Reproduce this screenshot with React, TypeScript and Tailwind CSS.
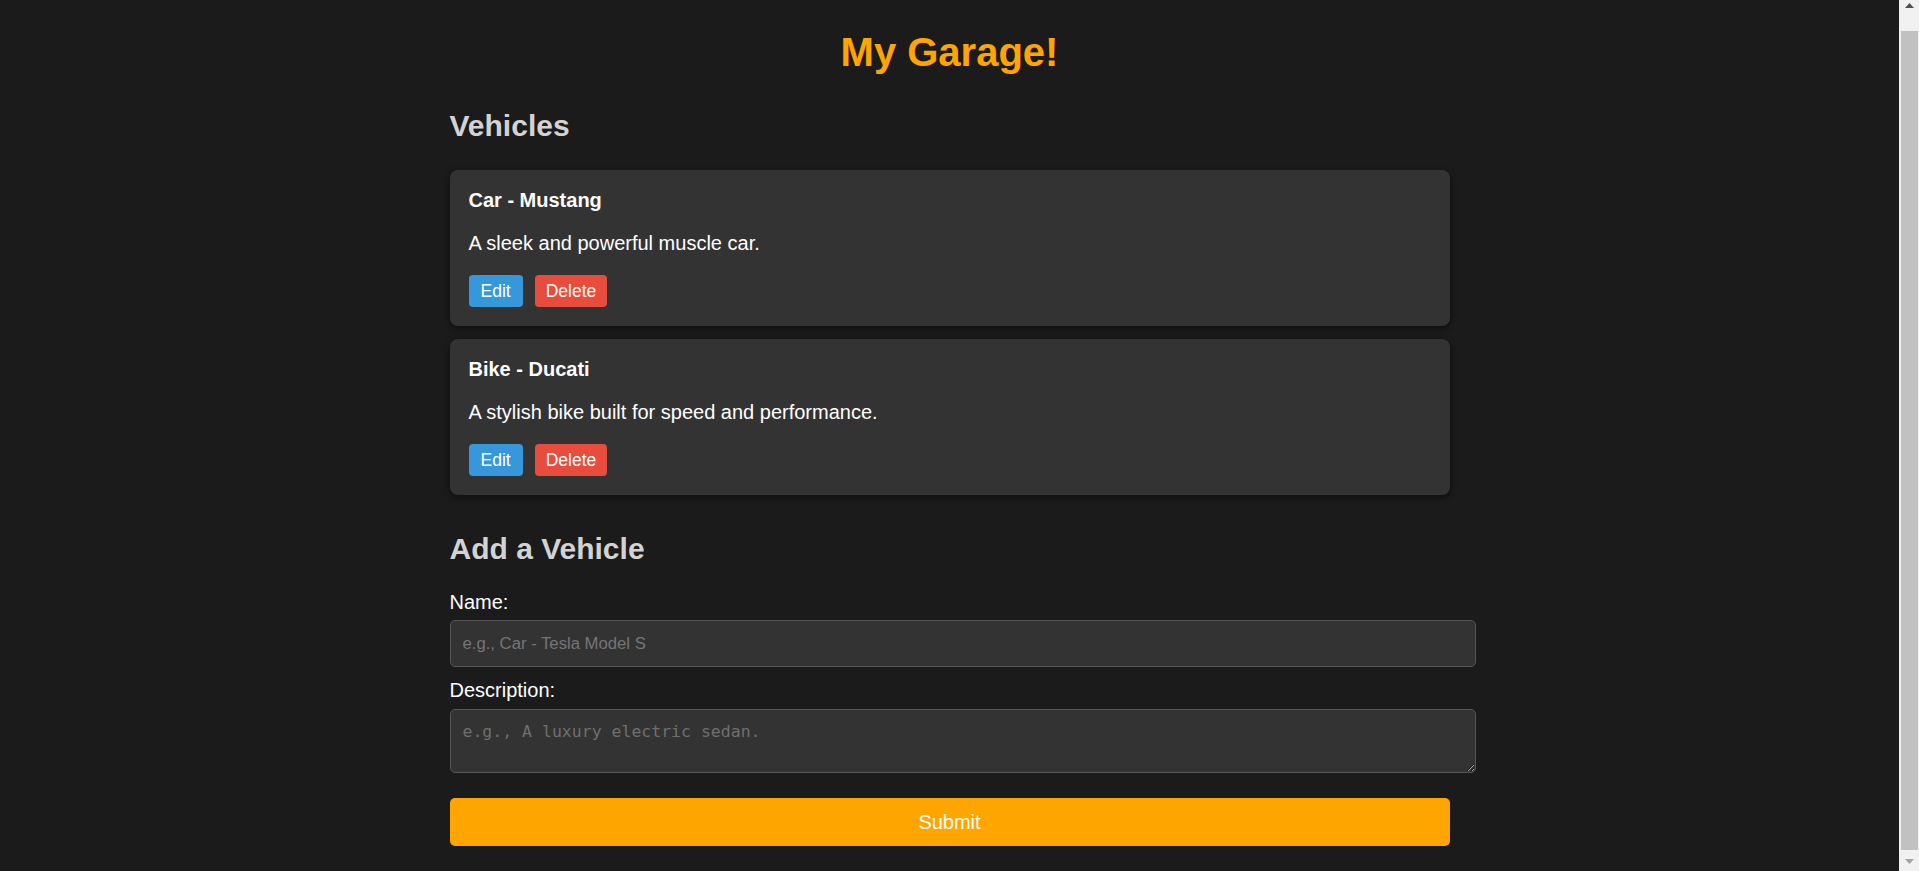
import { useState } from 'react'

type Vehicle = { id: number; name: string; description: string }

const initialVehicles: Vehicle[] = [
  { id: 1, name: 'Car - Mustang', description: 'A sleek and powerful muscle car.' },
  { id: 2, name: 'Bike - Ducati', description: 'A stylish bike built for speed and performance.' },
]

export default function App() {
  const [vehicles, setVehicles] = useState<Vehicle[]>(initialVehicles)
  const [name, setName] = useState('')
  const [description, setDescription] = useState('')

  const handleSubmit = (e: React.FormEvent) => {
    e.preventDefault()
    if (!name.trim()) return
    setVehicles(v => [...v, { id: Date.now(), name, description }])
    setName('')
    setDescription('')
  }

  const handleDelete = (id: number) => setVehicles(v => v.filter(x => x.id !== id))

  return (
    <div className="flex h-[871px] overflow-hidden bg-[#1b1b1b] font-['Liberation_Sans',Arial,sans-serif]">
      <main className="flex-1 min-w-0">
        <h1 className="mt-[29px] text-center text-[40px] leading-[46px] font-bold text-[#ffa500]">My Garage!</h1>

        <div className="w-[1000px] mx-auto">
          <h2 className="mt-[34px] text-[30px] leading-[34px] font-bold text-[#d3d3d3]">Vehicles</h2>

          <div className="mt-[27px] flex flex-col gap-[13px]">
            {vehicles.map(v => (
              <div key={v.id} className="rounded-[8px] bg-[#333333] p-[19px] shadow-[0_2px_6px_rgba(0,0,0,0.55)]">
                <h3 className="text-[20px] leading-[23px] font-bold text-white">{v.name}</h3>
                <p className="mt-[20px] text-[20px] leading-[23px] text-white">{v.description}</p>
                <div className="mt-[20px] flex gap-[12px]">
                  <button className="h-[32px] px-[12px] rounded-[4px] bg-[#3498db] text-[17.5px] text-white">Edit</button>
                  <button
                    onClick={() => handleDelete(v.id)}
                    className="h-[32px] px-[11px] rounded-[4px] bg-[#e74c3c] text-[17.5px] text-white"
                  >
                    Delete
                  </button>
                </div>
              </div>
            ))}
          </div>

          <h2 className="mt-[37px] text-[30px] leading-[34px] font-bold text-[#d3d3d3]">Add a Vehicle</h2>

          <form onSubmit={handleSubmit}>
            <label className="block mt-[25px] text-[20px] leading-[23px] text-white">Name:</label>
            <input
              value={name}
              onChange={e => setName(e.target.value)}
              placeholder="e.g., Car - Tesla Model S"
              className="block mt-[6px] w-[1026px] h-[47px] px-[12px] rounded-[5px] border border-[#555555] bg-[#333333] text-[16.7px] text-white placeholder:text-[#757575] outline-none"
            />

            <label className="block mt-[12px] text-[20px] leading-[23px] text-white">Description:</label>
            <textarea
              value={description}
              onChange={e => setDescription(e.target.value)}
              placeholder="e.g., A luxury electric sedan."
              className="block mt-[7px] w-[1026px] h-[64px] px-[12px] pt-[12px] rounded-[5px] border border-[#555555] bg-[#333333] font-['DejaVu_Sans_Mono',monospace] text-[16.5px] leading-[20px] text-white placeholder:text-[#6f6f6f] outline-none"
            />

            <button type="submit" className="block mt-[25px] w-full h-[48px] rounded-[5px] bg-[#ffa500] text-[20px] text-white">
              Submit
            </button>
          </form>
        </div>
      </main>

      {/* fake scrollbar */}
      <div className="w-[20px] flex flex-col bg-[#f1f1f1]">
        <div className="h-[21px] flex items-start justify-center pt-[3px]">
          <svg width="9" height="5" viewBox="0 0 9 5"><path d="M4.5 0L9 5H0z" fill="#505050" /></svg>
        </div>
        <div className="flex-1 mt-[10px] mb-[1px] ml-[2px] mr-[1px] bg-[#c1c1c1]" />
        <div className="h-[20px] flex items-center justify-center">
          <svg width="9" height="5" viewBox="0 0 9 5"><path d="M0 0H9L4.5 5z" fill="#a3a3a3" /></svg>
        </div>
      </div>
    </div>
  )
}
